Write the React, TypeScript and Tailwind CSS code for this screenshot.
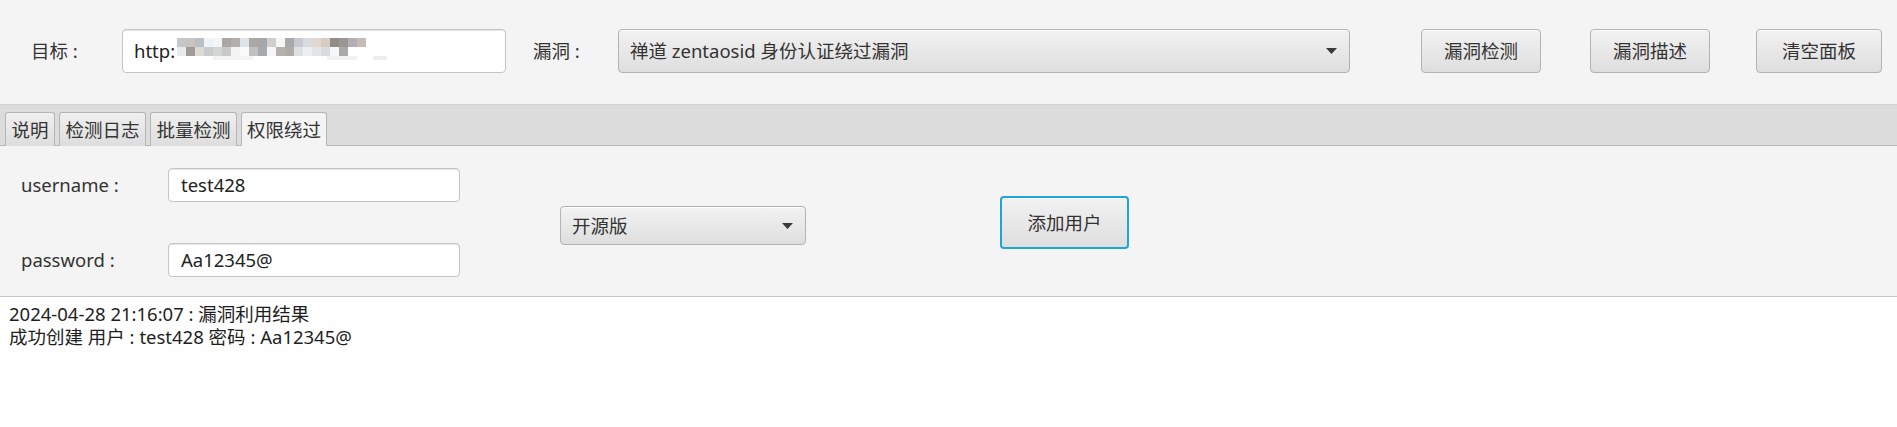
import React from "react"

// mosaic colours of the blurred host part of the url
const mosaicTop = [
  "#c4c7ca", "#c8c4c0", "#b8c0c6", "#eef3f6", "#f2f6f7", "#a9a6a3", "#b1aeab", "#dde4ec",
  "#aba8a5", "#a5a8ab", "#d0cfcc", "#f6f6f6", "#a8a9ab", "#c6cad0", "#d9dcde", "#e0d8d0",
  "#d6ccc4", "#8f8c8a", "#999694", "#b0b0b3", "#c4bdb6",
]
const mosaicBottom = [
  "#e8eaec", "#9e9b98", "#dedad6", "#c9cbcc", "#d4d6d6", "#c8caca", "#f4f4f4", "#fafafa",
  "#c0c1c2", "#a8a9aa", "#f6f6f6", "#b5b1ad", "#b0aca8", "#dee0e2", "#eceeef", "#e2e4e6",
  "#d8dadd", "#f6f6f6", "#a8a8aa", "#ffffff", "#ffffff",
]

function Mosaic() {
  return (
    <svg width="232" height="26" viewBox="0 0 232 26" className="ml-[2px]">
      {mosaicTop.map((c, i) => (
        <rect key={"t" + i} x={i * 9} y={0} width={9} height={9} fill={c} />
      ))}
      {mosaicBottom.map((c, i) => (
        <rect key={"b" + i} x={i * 9} y={9} width={9} height={9} fill={c} />
      ))}
      <rect x="36" y="18" width="40" height="4" fill="#f3f3f3" />
      <rect x="150" y="18" width="30" height="4" fill="#f1f1f1" />
      <rect x="196" y="18" width="14" height="4" fill="#eeeeee" />
    </svg>
  )
}

function Arrow() {
  return (
    <svg width="11" height="6" viewBox="0 0 11 6">
      <path d="M0 0h11l-5.5 6z" fill="#3a3a3a" />
    </svg>
  )
}

function FxButton({ label, w, focused }: { label: string; w: string; focused?: boolean }) {
  return (
    <button
      className={
        "flex items-center justify-center rounded-[4px] bg-linear-to-b from-[#f2f2f2] to-[#dedede] text-[#333333] shadow-[inset_0_1px_0_#ffffff] " +
        w +
        (focused ? " border-2 border-[#1ea5d8]" : " border border-[#b3b3b3]")
      }
    >
      {label}
    </button>
  )
}

function FxCombo({ label, w, h }: { label: string; w: string; h: string }) {
  return (
    <div
      className={
        "flex items-center justify-between rounded-[4px] border border-[#b3b3b3] bg-linear-to-b from-[#f2f2f2] to-[#dedede] pl-[11px] pr-[12px] text-[#333333] shadow-[inset_0_1px_0_#ffffff] " +
        w +
        " " +
        h
      }
    >
      <span>{label}</span>
      <Arrow />
    </div>
  )
}

function FxInput({ value, w, h }: { value: string; w: string; h: string }) {
  return (
    <div
      className={
        "flex items-center rounded-[4px] border border-[#c4c4c4] bg-white pl-[12px] text-[#222222] shadow-[inset_0_1px_1px_#e6e6e6] " +
        w +
        " " +
        h
      }
    >
      {value}
    </div>
  )
}

export default function App() {
  const tabs = [
    { label: "说明", w: "w-[50px]" },
    { label: "检测日志", w: "w-[87px]" },
    { label: "批量检测", w: "w-[87px]" },
    { label: "权限绕过", w: "w-[86px]", active: true },
  ]

  return (
    <div
      className="flex h-[427px] w-full flex-col bg-white text-[18.5px] leading-[22px]"
      style={{ fontFamily: '"Noto Sans", "Noto Sans CJK SC", sans-serif' }}
    >
      {/* top toolbar */}
      <div className="flex h-[104px] items-start bg-[#f4f4f4] pt-[29px]">
        <div className="flex h-[44px] w-[122px] items-center pl-[31px] text-[#333333]">目标 :</div>
        <div className="flex h-[44px] w-[384px] items-center rounded-[4px] border border-[#c4c4c4] bg-white pl-[11px] text-[#222222] shadow-[inset_0_1px_1px_#e6e6e6]">
          <span>http:</span>
          <Mosaic />
        </div>
        <div className="flex h-[44px] w-[112px] items-center pl-[27px] text-[#333333]">漏洞 :</div>
        <FxCombo label="禅道 zentaosid 身份认证绕过漏洞" w="w-[732px]" h="h-[44px]" />
        <div className="ml-[71px] flex gap-[49px]">
          <FxButton label="漏洞检测" w="w-[120px] h-[44px]" />
          <div className="flex gap-[46px]">
            <FxButton label="漏洞描述" w="w-[120px] h-[44px]" />
            <FxButton label="清空面板" w="w-[126px] h-[44px]" />
          </div>
        </div>
      </div>

      {/* tab header */}
      <div className="flex h-[42px] items-end gap-[4px] border-t border-b border-t-[#d2d2d2] border-b-[#b8b8b8] bg-[#dcdcdc] pl-[5px]">
        {tabs.map(t => (
          <div
            key={t.label}
            className={
              "-mb-px flex h-[34px] items-center justify-center rounded-t-[3px] border border-b-0 border-[#b5b5b5] text-[#333333] " +
              t.w +
              (t.active ? " bg-[#f4f4f4]" : " bg-linear-to-b from-[#f0f0f0] to-[#dddddd]")
            }
          >
            {t.label}
          </div>
        ))}
      </div>

      {/* tab content */}
      <div className="flex h-[151px] border-b border-[#c6c6c6] bg-[#f4f4f4]">
        <div className="flex flex-col gap-[41px] pt-[22px]">
          <div className="flex items-center">
            <div className="w-[168px] pl-[21px] text-[#333333]">username :</div>
            <FxInput value="test428" w="w-[292px]" h="h-[34px]" />
          </div>
          <div className="flex items-center">
            <div className="w-[168px] pl-[21px] text-[#333333]">password :</div>
            <FxInput value="Aa12345@" w="w-[292px]" h="h-[34px]" />
          </div>
        </div>
        <div className="ml-[100px] pt-[60px]">
          <FxCombo label="开源版" w="w-[246px]" h="h-[39px]" />
        </div>
        <div className="ml-[194px] pt-[50px]">
          <FxButton label="添加用户" w="w-[129px] h-[53px]" focused />
        </div>
      </div>

      {/* result log */}
      <div className="flex-1 bg-white pl-[9px] pt-[5px] text-[#1e1e1e] leading-[23px]">
        <div>2024-04-28 21:16:07 : 漏洞利用结果</div>
        <div>成功创建 用户 : test428 密码 : Aa12345@</div>
      </div>
    </div>
  )
}
